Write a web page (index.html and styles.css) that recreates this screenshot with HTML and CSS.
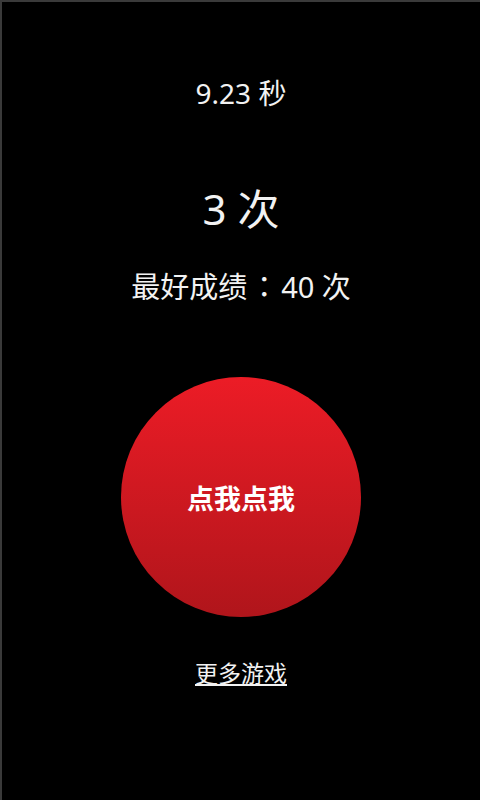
FILE: index.html
```html
<!DOCTYPE html>
<html lang="zh-CN">
<head>
    <meta charset="UTF-8">
    <meta name="viewport" content="width=device-width, initial-scale=1.0">
    <title>点我点我</title>
    <link rel="stylesheet" href="styles.css">
</head>
<body>
    <div class="screen">
        <!-- Timer and score -->
        <div class="timer">9.23 秒</div>
        <div class="count">3 次</div>
        <div class="best">最好成绩<span class="colon" lang="ja">：</span>40 次</div>

        <!-- Big tap button -->
        <button class="tap-button" id="tapButton">点我点我</button>

        <a class="more-games" href="#">更多游戏</a>
    </div>
</body>
</html>
```

FILE: styles.css
```css
html, body {
    margin: 0;
    padding: 0;
    background-color: #000;
}

body {
    font-family: "Noto Sans", "Noto Sans CJK SC", sans-serif;
    color: #f2f2f2;
}

.screen {
    box-sizing: border-box;
    height: 800px;
    border-top: 2px solid #3a3a3a;
    border-left: 2px solid #3a3a3a;
    display: flex;
    flex-direction: column;
    align-items: center;
}

.timer {
    margin-top: 71px;
    font-size: 28px;
    line-height: 40px;
}

.count {
    margin-top: 68px;
    font-size: 42px;
    line-height: 56px;
}

.best {
    margin-top: 30px;
    font-size: 29px;
    line-height: 40px;
}

/* JP glyph keeps the full-width colon centred */
.best .colon {
    display: inline-block;
    width: 34px;
    text-align: center;
    line-height: 1;
    font-family: "Noto Sans CJK JP", sans-serif;
}

/* Red round button */
.tap-button {
    margin-top: 70px;
    width: 240px;
    height: 240px;
    padding: 0;
    border: none;
    border-radius: 50%;
    background: linear-gradient(to bottom, #ec1c26, #b0151b);
    color: #fff;
    font-family: "Noto Sans CJK SC", sans-serif;
    font-size: 27px;
    font-weight: bold;
    cursor: pointer;
}

.more-games {
    margin-top: 38px;
    font-family: "Noto Sans CJK SC", sans-serif;
    font-size: 23px;
    color: #f2f2f2;
    text-decoration: underline;
}
```
